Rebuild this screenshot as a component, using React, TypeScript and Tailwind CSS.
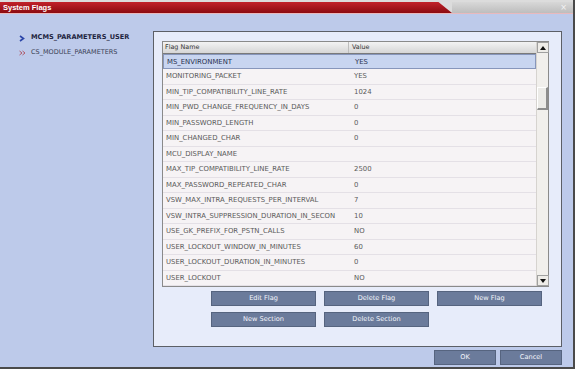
import React from 'react';

// System Flags dialog — section list on the left, flags grid on the right

const FLAGS: [string, string][] = [
  ['MS_ENVIRONMENT', 'YES'],
  ['MONITORING_PACKET', 'YES'],
  ['MIN_TIP_COMPATIBILITY_LINE_RATE', '1024'],
  ['MIN_PWD_CHANGE_FREQUENCY_IN_DAYS', '0'],
  ['MIN_PASSWORD_LENGTH', '0'],
  ['MIN_CHANGED_CHAR', '0'],
  ['MCU_DISPLAY_NAME', ''],
  ['MAX_TIP_COMPATIBILITY_LINE_RATE', '2500'],
  ['MAX_PASSWORD_REPEATED_CHAR', '0'],
  ['VSW_MAX_INTRA_REQUESTS_PER_INTERVAL', '7'],
  ['VSW_INTRA_SUPPRESSION_DURATION_IN_SECON', '10'],
  ['USE_GK_PREFIX_FOR_PSTN_CALLS', 'NO'],
  ['USER_LOCKOUT_WINDOW_IN_MINUTES', '60'],
  ['USER_LOCKOUT_DURATION_IN_MINUTES', '0'],
  ['USER_LOCKOUT', 'NO'],
];

const font = { fontFamily: '"DejaVu Sans", Verdana, sans-serif' };

function DlgButton({ label, wide }: { label: string; wide?: boolean }) {
  return (
    <button
      className={`${wide ? 'w-[105px]' : 'w-[62px]'} h-[15px] bg-[#6b7b9b] border border-[#56647f] text-[#f4f6fb] text-[6.6px] leading-none`}
    >
      {label}
    </button>
  );
}

function ScrollArrow({ up }: { up?: boolean }) {
  return (
    <div className="w-[12px] h-[11px] bg-[#eeece8] border border-[#a0a0a0] flex items-center justify-center">
      <svg width="6" height="4" viewBox="0 0 6 4">
        <path d={up ? 'M0 4 L3 0 L6 4 Z' : 'M0 0 L3 4 L6 0 Z'} fill="#111" />
      </svg>
    </div>
  );
}

export default function App() {
  return (
    <div className="w-[580px] h-[374px] bg-white overflow-hidden" style={font}>
      <div className="w-[575px] h-[369px] flex flex-col border-r-2 border-b-2 border-[#4a4a4a] bg-[#bdcaea]">
        {/* title bar */}
        <div className="h-[14px] flex bg-[#dcdcdc] border-b border-[#e9b9bd]">
          <div
            className="w-[452px] mt-[2px] bg-gradient-to-b from-[#c2222a] to-[#8c0a10] flex items-center pl-[3px] text-white font-bold text-[7.5px]"
            style={{ clipPath: 'polygon(0 0, 97% 0, 100% 100%, 0 100%)', fontFamily: '"Liberation Sans", Arial, sans-serif' }}
          >
            System Flags
          </div>
          <div className="flex-1 mt-[2px] bg-gradient-to-b from-[#d8d8d8] to-[#bdbdbd] flex items-center justify-end pr-[6px] text-[#f4f4f4] text-[8px]">
            ×
          </div>
        </div>

        <div className="flex-1 flex">
          {/* sections */}
          <div className="w-[153px] pt-[20px] pl-[19px] flex flex-col gap-[7px]">
            <div className="flex items-center gap-[6px] h-[8px]">
              <svg width="6" height="7" viewBox="0 0 6 7">
                <path d="M1 1 L4.5 3.5 L1 6" stroke="#2b45a8" strokeWidth="1.6" fill="none" />
              </svg>
              <span className="font-bold text-[6.6px] text-[#1e2440]">MCMS_PARAMETERS_USER</span>
            </div>
            <div className="flex items-center gap-[5px] h-[8px]">
              <svg width="7" height="6" viewBox="0 0 7 6">
                <path d="M0.5 1 L3 3 L0.5 5 M3.5 1 L6 3 L3.5 5" stroke="#b05a6a" strokeWidth="1" fill="none" />
              </svg>
              <span className="text-[6.5px] text-[#3a3f55]">CS_MODULE_PARAMETERS</span>
            </div>
          </div>

          {/* right column */}
          <div className="flex flex-col pt-[17px]">
            <div className="w-[409px] h-[316px] bg-[#e7ecfa] border border-[#5c5f66] pt-[9px] pl-[8px]">
              <div className="w-[387px] h-[246px] border border-[#8a8a8a] bg-[#f6f3f5] flex">
                <div className="w-[374px] flex flex-col">
                  <div className="h-[12px] flex bg-gradient-to-b from-[#f3f3f3] to-[#d6d6d6] border-b border-[#7a7a7a] text-[6.4px] text-[#333]">
                    <div className="w-[186px] pl-[2px] flex items-center border-r border-[#bdbdbd]">Flag Name</div>
                    <div className="flex-1 pl-[3px] flex items-center">Value</div>
                  </div>
                  {FLAGS.map(([name, value], i) => (
                    <div
                      key={name}
                      className={`h-[15.5px] flex items-center text-[6.9px] ${
                        i === 0
                          ? 'bg-[#c8d5f0] border border-[#8796bb] text-[#2a3350]'
                          : 'border-b border-[#e4e0e6] text-[#5a5a5a]'
                      }`}
                    >
                      <div className="w-[186px] pl-[3px] whitespace-nowrap overflow-hidden">{name}</div>
                      <div className="flex-1 pl-[5px]">{value}</div>
                    </div>
                  ))}
                </div>
                {/* scrollbar */}
                <div className="w-[12px] flex flex-col bg-[#f1efec] border-l border-[#d6d3cf]">
                  <ScrollArrow up />
                  <div className="flex-1 pt-[34px]">
                    <div className="h-[23px] bg-[#ecebe8] border-r-2 border-b-2 border-[#8d8d8d] border-t border-l border-t-white border-l-white" />
                  </div>
                  <ScrollArrow />
                </div>
              </div>

              <div className="pl-[49px] pt-[4px] flex flex-col gap-[6px]">
                <div className="flex gap-[8px]">
                  <DlgButton label="Edit Flag" wide />
                  <DlgButton label="Delete Flag" wide />
                  <DlgButton label="New Flag" wide />
                </div>
                <div className="flex gap-[8px]">
                  <DlgButton label="New Section" wide />
                  <DlgButton label="Delete Section" wide />
                </div>
              </div>
            </div>

            <div className="flex justify-end gap-[4px] pt-[3px]">
              <DlgButton label="OK" />
              <DlgButton label="Cancel" />
            </div>
          </div>
        </div>
      </div>
    </div>
  );
}
